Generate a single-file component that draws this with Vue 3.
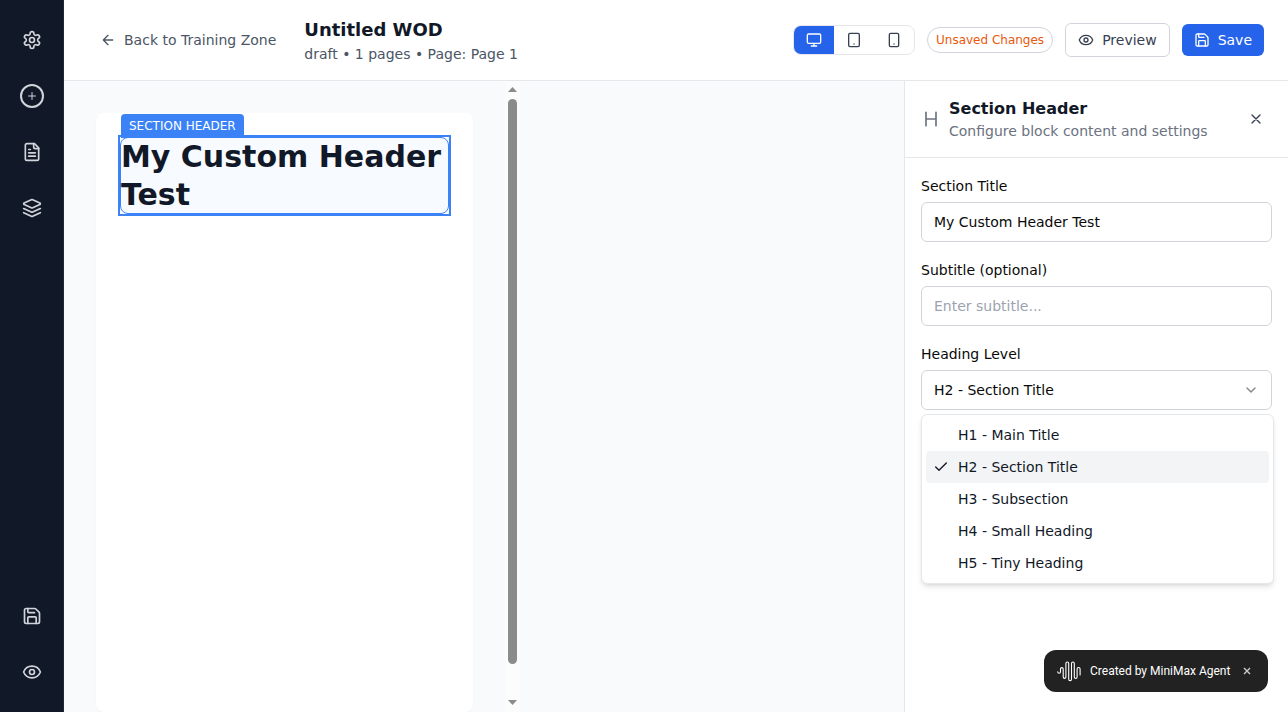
<script setup>
import { ref } from 'vue'

const sectionTitle = ref('My Custom Header Test')
const subtitle = ref('')
const selected = ref('H2 - Section Title')
const levels = [
  'H1 - Main Title',
  'H2 - Section Title',
  'H3 - Subsection',
  'H4 - Small Heading',
  'H5 - Tiny Heading',
]
</script>

<template>
  <div class="app">
    <nav class="rail">
      <div class="rail-group">
        <button class="rail-btn">
          <svg class="icon i20" viewBox="0 0 24 24"><path d="M12.22 2h-.44a2 2 0 0 0-2 2v.18a2 2 0 0 1-1 1.73l-.43.25a2 2 0 0 1-2 0l-.15-.08a2 2 0 0 0-2.73.73l-.22.38a2 2 0 0 0 .73 2.73l.15.1a2 2 0 0 1 1 1.72v.51a2 2 0 0 1-1 1.74l-.15.09a2 2 0 0 0-.73 2.73l.22.38a2 2 0 0 0 2.73.73l.15-.08a2 2 0 0 1 2 0l.43.25a2 2 0 0 1 1 1.73V20a2 2 0 0 0 2 2h.44a2 2 0 0 0 2-2v-.18a2 2 0 0 1 1-1.73l.43-.25a2 2 0 0 1 2 0l.15.08a2 2 0 0 0 2.73-.73l.22-.39a2 2 0 0 0-.73-2.73l-.15-.08a2 2 0 0 1-1-1.74v-.5a2 2 0 0 1 1-1.74l.15-.09a2 2 0 0 0 .73-2.73l-.22-.38a2 2 0 0 0-2.73-.73l-.15.08a2 2 0 0 1-2 0l-.43-.25a2 2 0 0 1-1-1.73V4a2 2 0 0 0-2-2z" /><circle cx="12" cy="12" r="3" /></svg>
        </button>
        <button class="rail-btn">
          <span class="ring"><svg class="icon i12" viewBox="0 0 24 24"><path d="M5 12h14M12 5v14" /></svg></span>
        </button>
        <button class="rail-btn">
          <svg class="icon i20" viewBox="0 0 24 24"><path d="M15 2H6a2 2 0 0 0-2 2v16a2 2 0 0 0 2 2h12a2 2 0 0 0 2-2V7Z" /><path d="M14 2v4a2 2 0 0 0 2 2h4M10 9H8M16 13H8M16 17H8" /></svg>
        </button>
        <button class="rail-btn">
          <svg class="icon i20" viewBox="0 0 24 24"><path d="m12.83 2.18a2 2 0 0 0-1.66 0L2.6 6.08a1 1 0 0 0 0 1.83l8.58 3.91a2 2 0 0 0 1.66 0l8.58-3.9a1 1 0 0 0 0-1.83Z" /><path d="m22 17.65-9.17 4.16a2 2 0 0 1-1.66 0L2 17.65" /><path d="m22 12.65-9.17 4.16a2 2 0 0 1-1.66 0L2 12.65" /></svg>
        </button>
      </div>
      <div class="rail-group">
        <button class="rail-btn">
          <svg class="icon i20" viewBox="0 0 24 24"><path d="M15.2 3a2 2 0 0 1 1.4.6l3.8 3.8a2 2 0 0 1 .6 1.4V19a2 2 0 0 1-2 2H5a2 2 0 0 1-2-2V5a2 2 0 0 1 2-2z" /><path d="M17 21v-7a1 1 0 0 0-1-1H8a1 1 0 0 0-1 1v7M7 3v4a1 1 0 0 0 1 1h7" /></svg>
        </button>
        <button class="rail-btn">
          <svg class="icon i20" viewBox="0 0 24 24"><path d="M2.062 12.348a1 1 0 0 1 0-.696 10.75 10.75 0 0 1 19.876 0 1 1 0 0 1 0 .696 10.75 10.75 0 0 1-19.876 0" /><circle cx="12" cy="12" r="3" /></svg>
        </button>
      </div>
    </nav>

    <div class="main">
      <header class="topbar">
        <button class="back">
          <svg class="icon i16" viewBox="0 0 24 24"><path d="m12 19-7-7 7-7M19 12H5" /></svg>
          Back to Training Zone
        </button>
        <div class="doc">
          <h1>Untitled WOD</h1>
          <p>draft • 1 pages • Page: Page 1</p>
        </div>
        <div class="actions">
          <div class="devices">
            <button class="device active">
              <svg class="icon i16" viewBox="0 0 24 24"><rect width="20" height="14" x="2" y="3" rx="2" /><path d="M8 21h8M12 17v4" /></svg>
            </button>
            <button class="device">
              <svg class="icon i16" viewBox="0 0 24 24"><rect width="16" height="20" x="4" y="2" rx="2" /><path d="M12 18h.01" /></svg>
            </button>
            <button class="device">
              <svg class="icon i16" viewBox="0 0 24 24"><rect width="14" height="20" x="5" y="2" rx="2" /><path d="M12 18h.01" /></svg>
            </button>
          </div>
          <span class="badge">Unsaved Changes</span>
          <button class="preview">
            <svg class="icon i16" viewBox="0 0 24 24"><path d="M2.062 12.348a1 1 0 0 1 0-.696 10.75 10.75 0 0 1 19.876 0 1 1 0 0 1 0 .696 10.75 10.75 0 0 1-19.876 0" /><circle cx="12" cy="12" r="3" /></svg>
            Preview
          </button>
          <button class="save">
            <svg class="icon i16" viewBox="0 0 24 24"><path d="M15.2 3a2 2 0 0 1 1.4.6l3.8 3.8a2 2 0 0 1 .6 1.4V19a2 2 0 0 1-2 2H5a2 2 0 0 1-2-2V5a2 2 0 0 1 2-2z" /><path d="M17 21v-7a1 1 0 0 0-1-1H8a1 1 0 0 0-1 1v7M7 3v4a1 1 0 0 0 1 1h7" /></svg>
            Save
          </button>
        </div>
      </header>

      <div class="work">
        <section class="canvas">
          <div class="scroller">
            <div class="page">
              <div class="block">
                <span class="tag">SECTION HEADER</span>
                <h2>{{ sectionTitle }}</h2>
              </div>
            </div>
          </div>
          <div class="track">
            <svg class="arrow" viewBox="0 0 9 5"><path d="M4.5 0 9 5H0z" /></svg>
            <span class="thumb"></span>
            <svg class="arrow" viewBox="0 0 9 5"><path d="M0 0h9L4.5 5z" /></svg>
          </div>
        </section>

        <aside class="panel">
          <div class="panel-head">
            <svg class="icon i20" viewBox="0 0 24 24"><path d="M6 12h12M6 20V4M18 20V4" /></svg>
            <div class="panel-title">
              <h3>Section Header</h3>
              <p>Configure block content and settings</p>
            </div>
            <button class="close">
              <svg class="icon i16" viewBox="0 0 24 24"><path d="M18 6 6 18M6 6l12 12" /></svg>
            </button>
          </div>
          <div class="fields">
            <div class="field">
              <label>Section Title</label>
              <input v-model="sectionTitle" type="text" />
            </div>
            <div class="field">
              <label>Subtitle (optional)</label>
              <input v-model="subtitle" type="text" placeholder="Enter subtitle..." />
            </div>
            <div class="field">
              <label>Heading Level</label>
              <div class="select">
                <span>{{ selected }}</span>
                <svg class="icon i16 chevron" viewBox="0 0 24 24"><path d="m6 9 6 6 6-6" /></svg>
              </div>
              <ul class="menu">
                <li v-for="level in levels" :key="level" :class="{ current: level === selected }" @click="selected = level">
                  <span class="mark">
                    <svg v-if="level === selected" class="icon i16" viewBox="0 0 24 24"><path d="M20 6 9 17l-5-5" /></svg>
                  </span>
                  {{ level }}
                </li>
              </ul>
            </div>
          </div>
        </aside>
      </div>
    </div>

    <div class="toast">
      <svg class="wave" viewBox="0 0 25 21"><path d="M.7 10.8a1.4 1.4 0 0 0 2.8 0V8a1.35 1.35 0 0 1 2.7 0v8a1.35 1.35 0 0 0 2.7 0V2.4a1.4 1.4 0 0 1 2.8 0v15.8a1.4 1.4 0 0 0 2.8 0V2.4a1.4 1.4 0 0 1 2.8 0V16a1.4 1.4 0 0 0 2.8 0V8a1.5 1.5 0 0 1 3 0v6" /></svg>
      <span class="toast-text">Created by MiniMax Agent</span>
      <svg class="toast-x" viewBox="0 0 8 8"><path d="m1 1 6 6M7 1 1 7" /></svg>
    </div>
  </div>
</template>

<style>
body {
  margin: 0;
  overflow: hidden;
}
</style>

<style scoped>
* {
  box-sizing: border-box;
}
.app {
  position: relative;
  display: flex;
  width: 1288px;
  height: 712px;
  overflow: hidden;
  background: #fff;
  color: #0a0a0a;
  font-family: "DejaVu Sans", sans-serif;
  font-size: 14px;
  line-height: 20px;
}
h1, h2, h3, p, ul {
  margin: 0;
  padding: 0;
}
button {
  display: flex;
  align-items: center;
  justify-content: center;
  margin: 0;
  padding: 0;
  border: 0;
  background: none;
  font: inherit;
  color: inherit;
}
.icon {
  display: block;
  flex: none;
  fill: none;
  stroke: currentColor;
  stroke-width: 2;
  stroke-linecap: round;
  stroke-linejoin: round;
}
.i12 { width: 12px; height: 12px; }
.i16 { width: 16px; height: 16px; }
.i20 { width: 20px; height: 20px; }

.rail {
  display: flex;
  flex: none;
  flex-direction: column;
  justify-content: space-between;
  align-items: center;
  width: 64px;
  padding: 16px 0;
  border-right: 1px solid #1f2937;
  background: #111827;
  color: #d1d5db;
}
.rail-group {
  display: flex;
  flex-direction: column;
  gap: 8px;
}
.rail-btn {
  width: 48px;
  height: 48px;
  margin-left: 1px;
}
.ring {
  display: flex;
  align-items: center;
  justify-content: center;
  width: 24px;
  height: 24px;
  border: 2px solid currentColor;
  border-radius: 50%;
}
.main {
  display: flex;
  flex: 1;
  flex-direction: column;
  min-width: 0;
}
.topbar {
  display: flex;
  flex: none;
  align-items: center;
  height: 81px;
  padding: 0 24px;
  border-bottom: 1px solid #e5e7eb;
}
.back {
  gap: 8px;
  padding: 0 12px;
  color: #4b5563;
}
.doc {
  margin-left: 16px;
}
.doc h1 {
  font-size: 18px;
  line-height: 28px;
  color: #111827;
}
.doc p {
  color: #4b5563;
}
.actions {
  display: flex;
  align-items: center;
  gap: 12px;
  margin-left: auto;
  color: #374151;
}
.devices {
  display: flex;
  height: 30px;
  overflow: hidden;
  border: 1px solid #e5e7eb;
  border-radius: 8px;
}
.device {
  width: 40px;
}
.device.active {
  background: #2563eb;
  color: #fff;
}
.badge {
  padding: 4px 8px;
  border: 1px solid #d1d5db;
  border-radius: 13px;
  font-size: 12px;
  line-height: 16px;
  color: #ea580c;
}
.preview {
  gap: 8px;
  height: 34px;
  padding: 0 12px;
  border: 1px solid #d1d5db;
  border-radius: 6px;
}
.save {
  gap: 8px;
  height: 32px;
  padding: 0 12px;
  border-radius: 6px;
  background: #2563eb;
  color: #fff;
}
.work {
  display: flex;
  flex: 1;
  min-height: 0;
}
.canvas {
  display: flex;
  flex: 1;
  background: #f9fafb;
}
.scroller {
  width: 441px;
  padding: 32px;
}
.page {
  height: 599px;
  padding: 24px;
  border-radius: 8px;
  background: #fff;
  box-shadow: 0 1px 2px rgba(0, 0, 0, 0.04);
}
.block {
  position: relative;
  border: 1px solid #3b82f6;
  border-radius: 8px;
  background: #f7faff;
}
.block::before {
  content: "";
  position: absolute;
  inset: -3px;
  border: 2px solid #3b82f6;
}
.block h2 {
  font-size: 30px;
  line-height: 37.5px;
  color: #111827;
}
.tag {
  position: absolute;
  top: -24px;
  left: 0;
  padding: 4px 8px;
  border-radius: 4px 4px 0 0;
  background: #3b82f6;
  color: #fff;
  font-size: 12px;
  line-height: 16px;
  white-space: nowrap;
}
.track {
  display: flex;
  flex-direction: column;
  align-items: center;
  width: 15px;
  padding: 6px 0 7px;
  background: #fcfcfc;
}
.arrow {
  width: 9px;
  height: 5px;
  fill: #8b8b8b;
}
.thumb {
  width: 9px;
  height: 565px;
  margin: 7px 0 auto;
  border-radius: 5px;
  background: #8b8b8b;
}
.panel {
  display: flex;
  flex: none;
  flex-direction: column;
  width: 384px;
  border-left: 1px solid #e5e7eb;
  background: #fff;
}
.panel-head {
  display: flex;
  align-items: center;
  gap: 8px;
  padding: 16px;
  border-bottom: 1px solid #e5e7eb;
  color: #6b7280;
}
.panel-title {
  flex: 1;
}
.panel-title h3 {
  font-size: 16px;
  line-height: 24px;
  color: #111827;
}
.close {
  width: 32px;
  height: 32px;
  color: #374151;
}
.fields {
  display: flex;
  flex-direction: column;
  gap: 18px;
  padding: 18px 16px;
}
.field {
  position: relative;
  display: flex;
  flex-direction: column;
  gap: 6px;
}
input, .select {
  display: flex;
  align-items: center;
  justify-content: space-between;
  width: 100%;
  height: 40px;
  margin: 0;
  padding: 0 12px;
  border: 1px solid #d1d5db;
  border-radius: 6px;
  outline: none;
  background: #fff;
  font: inherit;
  color: #0a0a0a;
}
input::placeholder {
  color: #9ca3af;
}
.chevron {
  color: #858585;
}
.menu {
  position: absolute;
  top: 70px;
  left: 0;
  width: 353px;
  padding: 4px;
  border: 1px solid #e5e7eb;
  border-radius: 6px;
  background: #fff;
  box-shadow: 0 4px 6px -1px rgba(0, 0, 0, 0.1), 0 2px 4px -2px rgba(0, 0, 0, 0.1);
  color: #111827;
  list-style: none;
}
.menu li {
  display: flex;
  align-items: center;
  height: 32px;
  padding-left: 7px;
  border-radius: 4px;
}
.menu li.current {
  background: #f3f4f6;
}
.mark {
  width: 25px;
}
.toast {
  position: absolute;
  right: 20px;
  bottom: 20px;
  display: flex;
  align-items: center;
  width: 224px;
  height: 42px;
  padding: 0 17px 0 13px;
  border-radius: 12px;
  background: #222;
  color: #fff;
  font-family: Roboto, sans-serif;
  font-size: 12px;
  font-weight: 400;
}
.wave {
  width: 25px;
  height: 21px;
  margin-right: 8px;
  fill: none;
  stroke: #fff;
  stroke-width: 1.1;
  stroke-linecap: round;
}
.toast-text {
  white-space: nowrap;
}
.toast-x {
  width: 8px;
  height: 8px;
  margin-left: auto;
  fill: none;
  stroke: #ccc;
  stroke-width: 1.4;
}
</style>
